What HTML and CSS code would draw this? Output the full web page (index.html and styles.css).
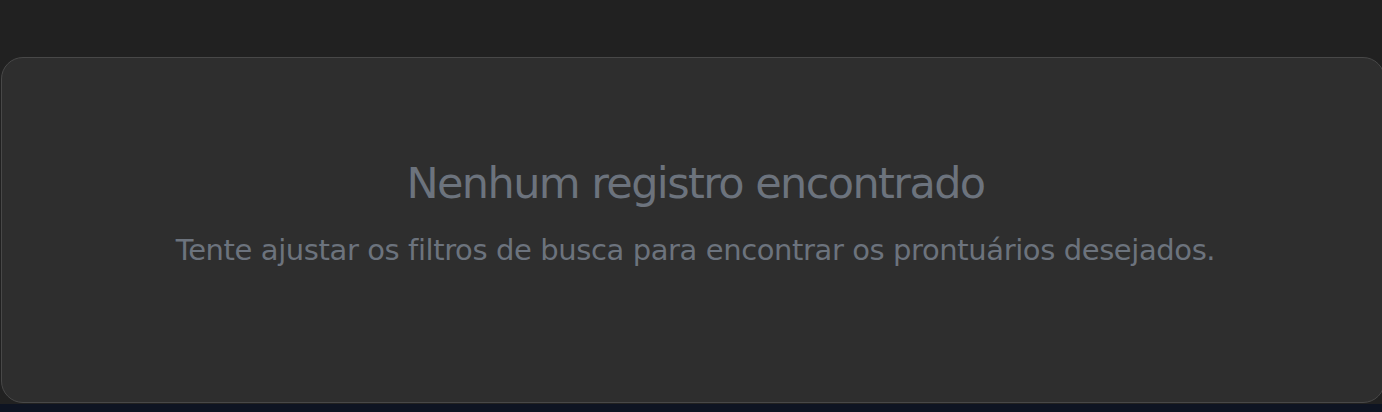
FILE: index.html
```html
<!DOCTYPE html>
<html lang="pt-BR">
<head>
<meta charset="utf-8">
<title>Prontuários</title>
<link rel="stylesheet" href="styles.css">
</head>
<body>
<div class="page">
  <section class="card">
    <div class="empty">
      <h2 class="empty-title">Nenhum registro encontrado</h2>
      <p class="empty-text">Tente ajustar os filtros de busca para encontrar os prontuários desejados.</p>
    </div>
  </section>
</div>
</body>
</html>
```

FILE: styles.css
```css
* { box-sizing: border-box; }
html, body { margin: 0; padding: 0; }
body {
  background: #0e1422;
  font-family: "DejaVu Sans", Verdana, sans-serif;
  height: 412px;
  overflow: hidden;
}
.page {
  background: #212121;
  height: 404px;
  padding: 57px 0 1px 1px;
}
.card {
  width: 1384px;
  height: 346px;
  background: #2e2e2e;
  border: 1px solid #484848;
  border-radius: 22px;
  display: flex;
  align-items: flex-start;
  justify-content: center;
  padding: 100px 0 0 5px;
}
.empty {
  text-align: center;
}
.empty-title {
  margin: 0;
  font-size: 43px;
  font-weight: 400;
  line-height: 50px;
  letter-spacing: -1.6px;
  color: #6c737d;
}
.empty-text {
  margin: 25px 0 0;
  font-size: 29px;
  line-height: 34px;
  letter-spacing: -0.4px;
  color: #6c737d;
}
```
